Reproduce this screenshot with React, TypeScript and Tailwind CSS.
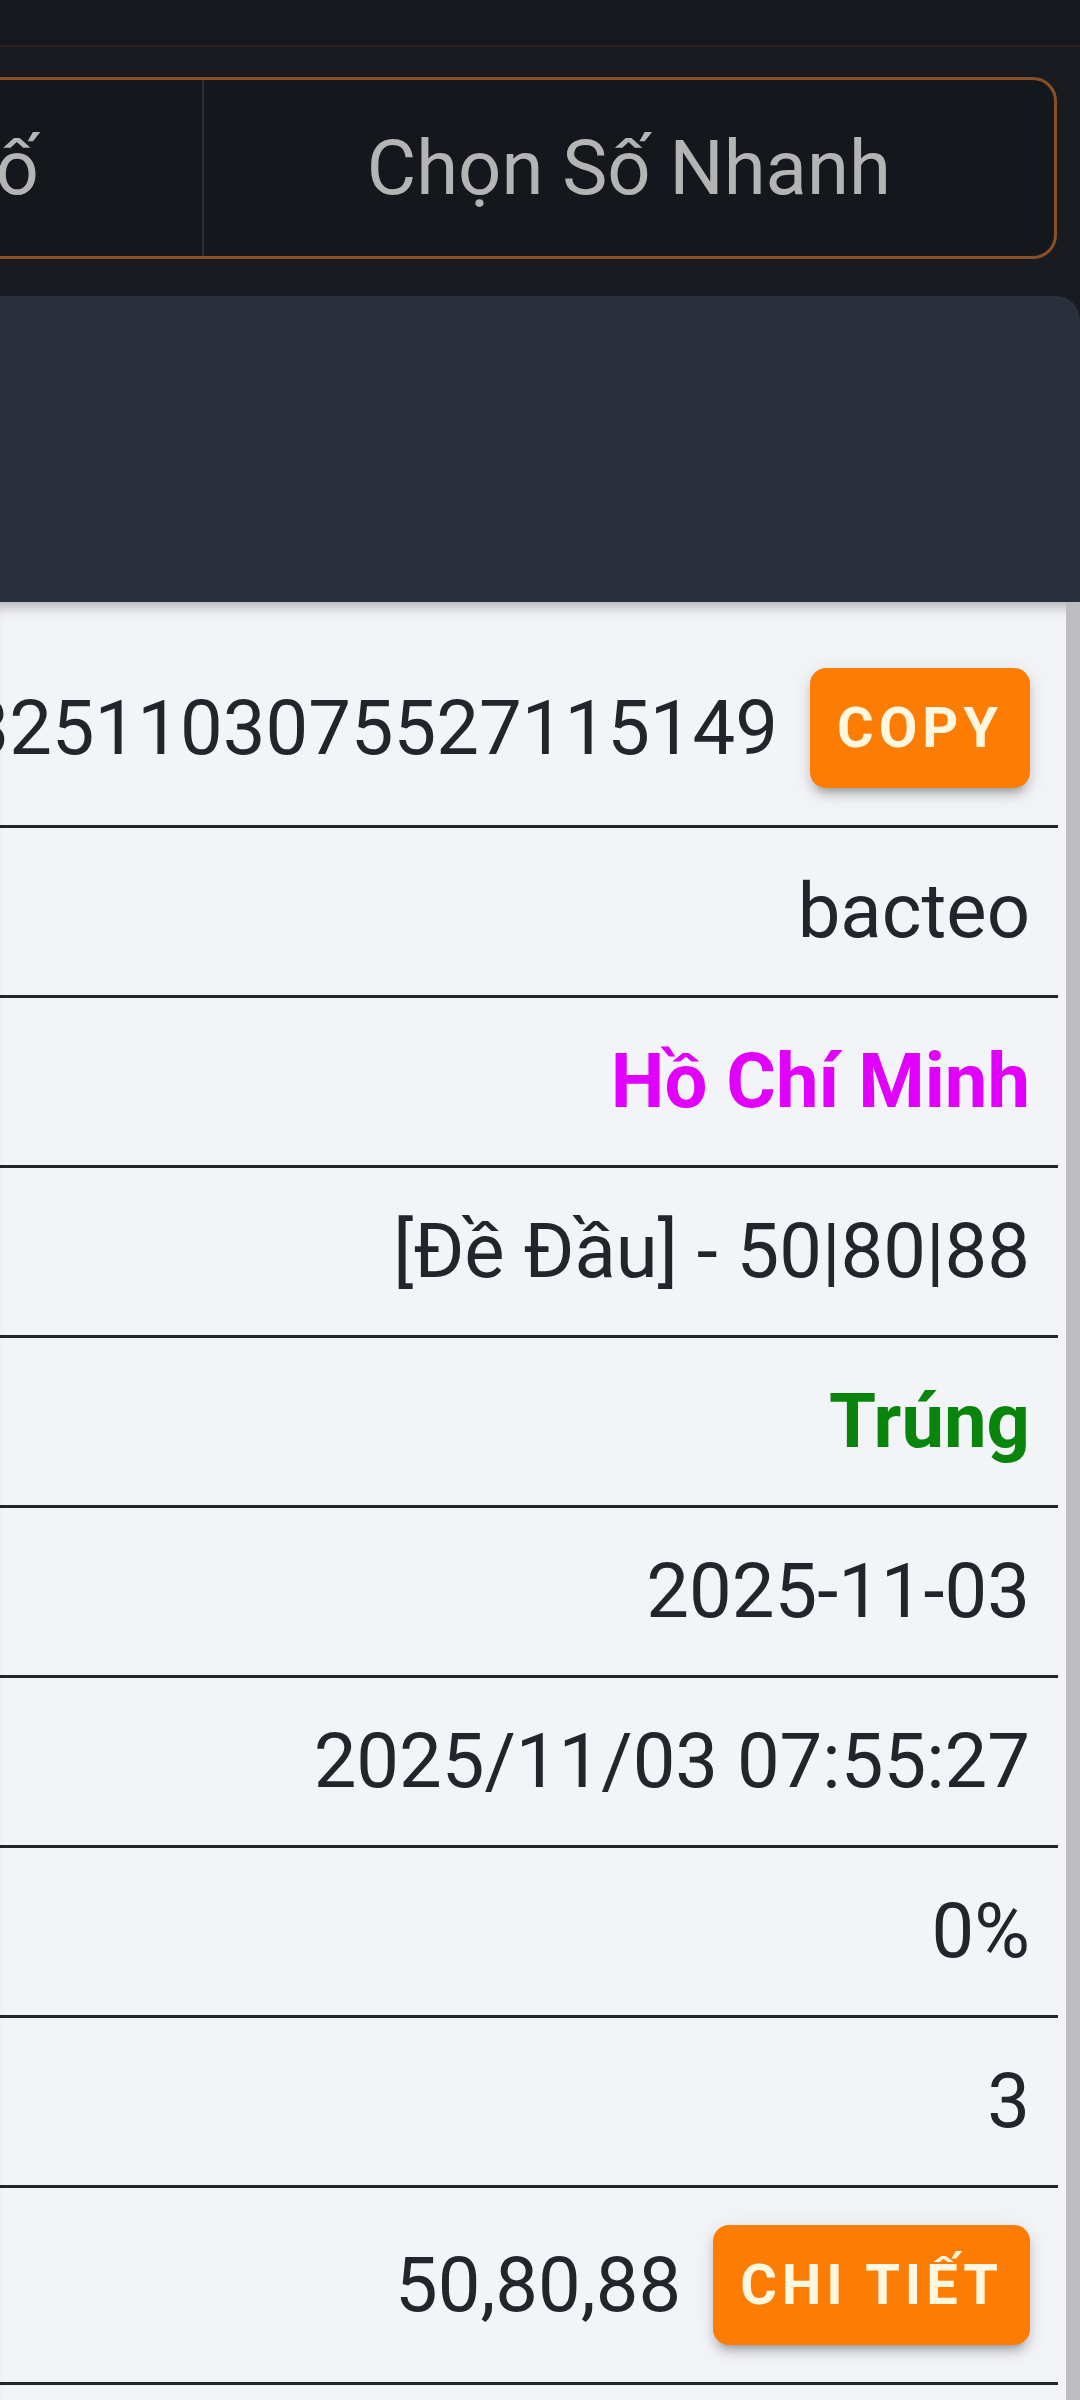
import React from "react";

type Row = {
  text: string;
  cls?: string;
  button?: string;
};

const rows: Row[] = [
  { text: "3251103075527115149", button: "COPY" },
  { text: "bacteo" },
  { text: "Hồ Chí Minh", cls: "font-bold text-[#e000fc]" },
  { text: "[Đề Đầu] - 50|80|88" },
  { text: "Trúng", cls: "font-bold text-[#0a850b]" },
  { text: "2025-11-03" },
  { text: "2025/11/03 07:55:27" },
  { text: "0%" },
  { text: "3" },
  { text: "50,80,88", button: "CHI TIẾT" },
];

export default function App() {
  return (
    <div className="w-[1080px] h-[2400px] overflow-hidden flex flex-col bg-[#f3f4f8] font-[Roboto,'Noto_Sans',sans-serif]">
      {/* top bar */}
      <div className="h-[45px] shrink-0 bg-[#15181d]" />
      <div className="h-[2px] shrink-0 bg-[#2a2420]" />
      {/* tabs */}
      <div className="shrink-0 bg-[#181b20] pt-[30px] pb-[37px]">
        <div className="-ml-[650px] w-[1707px] h-[182px] grid grid-cols-2 rounded-[24px] border-[3px] border-[#8a4f27] bg-[#14171c]">
          <div className="flex items-center justify-center border-r-2 border-[#2a2e35] pl-[20px] text-[76px] text-[#b4b4b4] whitespace-nowrap">
            Nhập Nhiều Số
          </div>
          <div className="flex items-center justify-center text-[76px] text-[#b4b4b4] whitespace-nowrap">
            Chọn Số Nhanh
          </div>
        </div>
      </div>
      {/* dark header panel */}
      <div className="shrink-0 bg-[#181b20]">
        <div className="h-[306px] bg-[#2a303b] rounded-tr-[24px]" />
      </div>
      {/* body */}
      <div className="flex flex-1 min-h-0 shadow-[inset_0_14px_14px_-10px_rgba(0,0,0,0.3)]">
        <div className="flex-1 min-w-0 pt-[29px]">
          {rows.map((r, i) => (
            <div
              key={i}
              className="flex items-center justify-end gap-[32px] py-[37px] pr-[28px] border-b-[3px] border-[#22262c] overflow-hidden"
            >
              <span
                className={`shrink-0 whitespace-nowrap text-[76px] leading-[93px] ${
                  r.cls ?? "text-[#22262c]"
                }`}
              >
                {r.text}
              </span>
              {r.button && (
                <button className="shrink-0 h-[120px] px-[27px] rounded-[16px] bg-[#fd7d04] text-[#fff7e0] text-[56px] font-bold tracking-[5px] leading-none whitespace-nowrap shadow-[0_10px_6px_-8px_rgba(0,0,0,0.22),0_8px_10px_0_rgba(0,0,0,0.14),0_4px_22px_0_rgba(0,0,0,0.1)]">
                  {r.button}
                </button>
              )}
            </div>
          ))}
        </div>
        <div className="w-[8px] shrink-0" />
        <div className="w-[14px] shrink-0 bg-[#bdbdbf]" />
      </div>
    </div>
  );
}
